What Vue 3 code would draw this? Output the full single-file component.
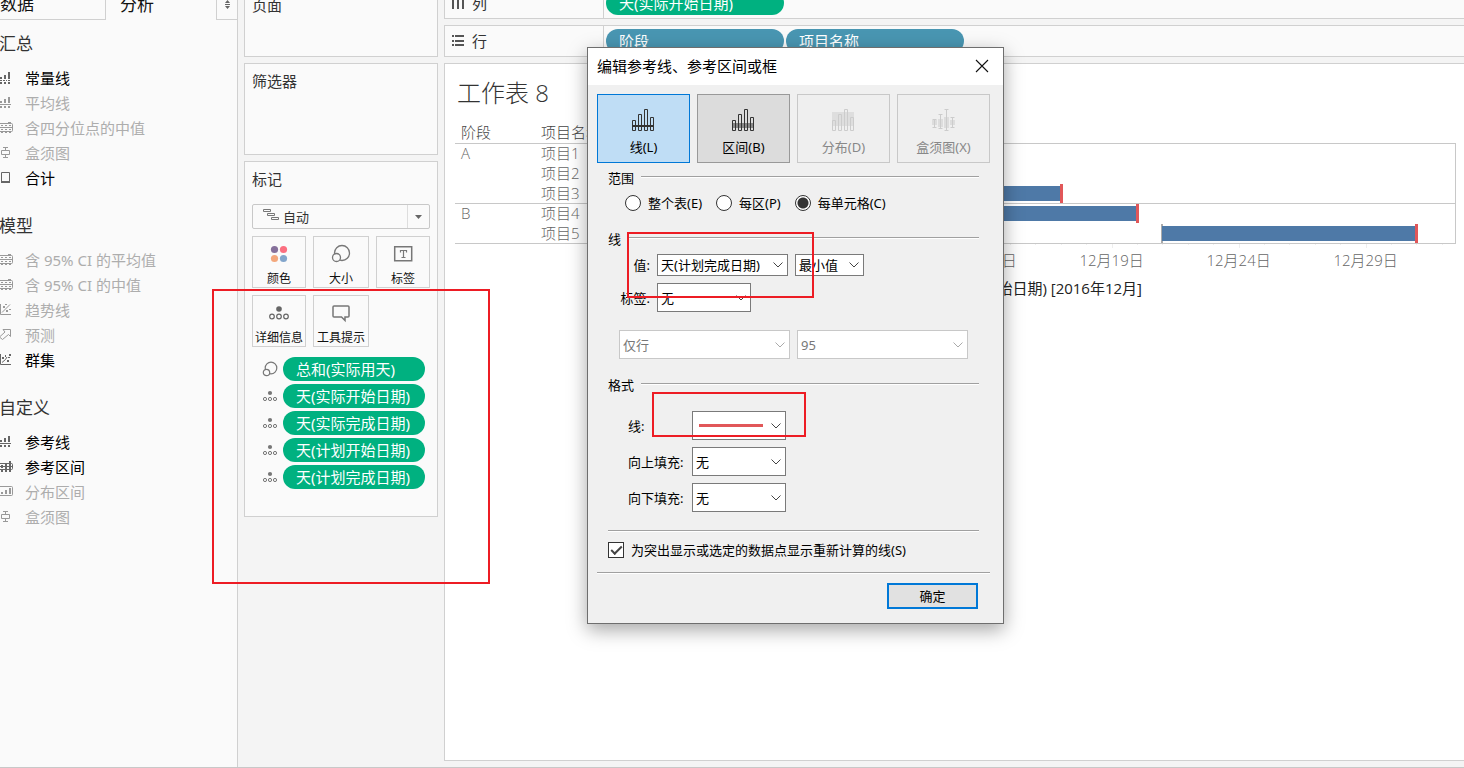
<script setup>
import { ref } from 'vue'

const glyphs = {
  constant: { fill: 'M1 6h2v2H1zM5 4h2v4H5zM9 1h2v7H9zM1 9h2v1H1zM4 9h2v1H4zM7 9h1v1H7zM9 9h2v1H9zM1 11h2v2H1zM5 11h2v2H5zM9 11h2v2H9z', line: '' },
  average: { fill: 'M1 5h2v2H1zM5 3h2v4H5zM9 1h2v6H9zM0 8h12v1H0zM1 10h2v2H1zM5 10h2v2H5zM9 10h2v2H9z', line: '' },
  band: { fill: 'M2 4h2v1H2zM6 4h2v1H6zM10 4h2v1h-2zM2 8h2v1H2zM6 8h2v1H6zM10 8h2v1h-2zM9 1h3v1H9zM2 11h2v1H2zM6 11h2v1H6zM10 11h2v1h-2z', line: 'M0 2.500h12.500q1 0 1 1v6q0 1-1 1H0M0 6.500h13' },
  box: { fill: '', line: 'M4 1.500h5M6.500 1.500v3M2.500 4.500h8v4h-8zM6.500 8.500v3M4 11.500h5' },
  total: { fill: 'M2 10h9v2H2z', line: 'M2.500 1.500h8v10h-8z' },
  trend: { fill: 'M4 3h2v2H4zM6 1h2v1H6zM7 7h2v2H7zM10 6h2v1h-2z', line: 'M1.500 1v10.500H12M3 9.500L11 1.500' },
  forecast: { fill: '', line: 'M4 1.500h7.500v7l-2-2L3.500 11.500.5 9 6 4z' },
  cluster: { fill: 'M3 4h2v2H3zM6 2h1v2H6zM9 4h2v1H9zM10 1h2v2h-2zM8 7h2v2H8z', line: 'M1.500 1v10.500H12M3 9.500L6.500 6.500 8 4' },
  interval: { fill: 'M2 5h2v3H2zM6 3h2v6H6zM10 1h2v8h-2zM2 10h2v2H2zM6 10h2v2H6zM10 10h2v2h-2zM0 6h13v1H0z', line: 'M0 3.500h12.500q1 0 1 1v4q0 1-1 1H0' },
  spread: { fill: 'M2 7h2v2H2zM6 5h2v4H6zM10 3h2v6h-2z', line: 'M0 1.500h12.500q1 0 1 1v7q0 1-1 1H0' }
}

const sections = [
  { title: '汇总', items: [
    { text: '常量线', icon: 'constant', on: true },
    { text: '平均线', icon: 'average', on: false },
    { text: '含四分位点的中值', icon: 'band', on: false },
    { text: '盒须图', icon: 'box', on: false },
    { text: '合计', icon: 'total', on: true }
  ] },
  { title: '模型', items: [
    { text: '含 95% CI 的平均值', icon: 'band', on: false },
    { text: '含 95% CI 的中值', icon: 'band', on: false },
    { text: '趋势线', icon: 'trend', on: false },
    { text: '预测', icon: 'forecast', on: false },
    { text: '群集', icon: 'cluster', on: true }
  ] },
  { title: '自定义', items: [
    { text: '参考线', icon: 'average', on: true },
    { text: '参考区间', icon: 'interval', on: true },
    { text: '分布区间', icon: 'spread', on: false },
    { text: '盒须图', icon: 'box', on: false }
  ] }
]

const markFields = [
  { text: '总和(实际用天)', size: true },
  { text: '天(实际开始日期)' },
  { text: '天(实际完成日期)' },
  { text: '天(计划开始日期)' },
  { text: '天(计划完成日期)' }
]

const SPAN = 32.52
const pct = (d) => (d / SPAN) * 100 + '%'

const bars = [
  { from: 2, to: 6, limit: 6 },
  { from: 5, to: 9, limit: 9 },
  { from: 8, to: 17, limit: 17 },
  { from: 12, to: 20, limit: 20 },
  { from: 21, to: 31, limit: 31 }
]
const days = Array.from({ length: 32 }, (_, i) => i + 1)
const ticks = [4, 9, 14, 19, 24, 29]

const kinds = [
  { id: 'line', text: '线(L)' },
  { id: 'range', text: '区间(B)' },
  { id: 'dist', text: '分布(D)' },
  { id: 'whisker', text: '盒须图(X)' }
]
const scopes = [
  { id: 'table', text: '整个表(E)' },
  { id: 'pane', text: '每区(P)' },
  { id: 'cell', text: '每单元格(C)' }
]
const scope = ref('cell')
const recalc = ref(true)
</script>

<template>
  <div class="app">
    <div class="workspace">
      <aside class="sidebar">
        <div class="tabs">
          <button class="tab tab-data">数据</button>
          <button class="tab tab-analysis">分析</button>
          <button class="tab tab-more" aria-label="展开">
            <svg width="7" height="9" viewBox="0 0 7 9"><path d="M3.500 0L6 3H1zM1 4h5v1H1zM3.500 9L6 6H1z" fill="#666" /></svg>
          </button>
        </div>
        <div class="groups">
          <section v-for="s in sections" :key="s.title" class="group">
            <h2>{{ s.title }}</h2>
            <ul>
              <li v-for="it in s.items" :key="it.text">
                <button class="option" :disabled="!it.on">
                  <svg width="14" height="13" viewBox="0 0 14 13">
                    <path :d="glyphs[it.icon].fill" fill="currentColor" />
                    <path :d="glyphs[it.icon].line" fill="none" stroke="currentColor" />
                  </svg>
                  <span>{{ it.text }}</span>
                </button>
              </li>
            </ul>
          </section>
        </div>
      </aside>

      <div class="cards">
        <section class="card card-pages"><h3>页面</h3></section>
        <section class="card card-filters"><h3>筛选器</h3></section>
        <section class="card card-marks">
          <h3>标记</h3>
          <div class="mark-type">
            <svg class="gantt" width="16" height="13" viewBox="0 0 16 13" fill="none" stroke="#777"><path d="M.5 1.500h7v2h-7zM4.500 5.500h7v2h-7zM8.500 9.500h7v2h-7z" /></svg>
            <select aria-label="标记类型"><option>自动</option></select>
            <svg class="caret" width="23" height="23" viewBox="0 0 23 23"><path d="M1.500 0v23" stroke="#ddd" /><path d="M9 10h7l-3.500 4z" fill="#666" /></svg>
          </div>
          <div class="mark-buttons">
            <button>
              <svg width="24" height="24" viewBox="0 0 24 24"><circle cx="7.500" cy="7.500" r="3.600" fill="#85709b" /><circle cx="16.500" cy="7.500" r="3.600" fill="#fb6f80" /><circle cx="7.500" cy="16.500" r="3.600" fill="#f3a77c" /><circle cx="16.500" cy="16.500" r="3.600" fill="#82a5cb" /></svg>
              <span>颜色</span>
            </button>
            <button>
              <svg width="24" height="24" viewBox="0 0 24 24" fill="none" stroke="#777" stroke-width="1.300"><circle cx="13" cy="11" r="7.500" /><circle cx="7.500" cy="15.500" r="4" fill="#fafafa" /></svg>
              <span>大小</span>
            </button>
            <button>
              <svg width="24" height="24" viewBox="0 0 24 24" fill="none" stroke="#777"><path stroke-width="1.500" d="M3.700 4.700h17v14h-17z" /><path d="M9.500 10.500v-2h6v2M12.500 8.500v7M10.500 15.500h4" stroke-width="1.200" /></svg>
              <span>标签</span>
            </button>
            <button>
              <svg width="24" height="24" viewBox="0 0 24 24" fill="none" stroke="#666" stroke-width="1.200"><circle cx="12" cy="8" r="2.800" fill="#666" stroke="none" /><circle cx="5" cy="15.500" r="2.300" /><circle cx="12" cy="15.500" r="2.300" /><circle cx="19" cy="15.500" r="2.300" /></svg>
              <span>详细信息</span>
            </button>
            <button>
              <svg width="24" height="24" viewBox="0 0 24 24" fill="none" stroke="#777" stroke-width="1.500"><path d="M5 5h14q1 0 1 1v9q0 1-1 1h-3v3.500L12.500 16H5q-1 0-1-1V6q0-1 1-1z" /></svg>
              <span>工具提示</span>
            </button>
          </div>
          <ul class="fields">
            <li v-for="f in markFields" :key="f.text">
              <svg v-if="f.size" width="16" height="16" viewBox="0 0 16 16" fill="none" stroke="#777" stroke-width="1.200"><circle cx="9" cy="7" r="5.800" /><circle cx="4.500" cy="11.500" r="3.200" fill="#fafafa" /></svg>
              <svg v-else width="16" height="16" viewBox="0 0 16 16" fill="none" stroke="#777"><circle cx="8" cy="5" r="2.100" fill="#777" stroke="none" /><circle cx="3" cy="11" r="1.600" /><circle cx="8" cy="11" r="1.600" /><circle cx="13" cy="11" r="1.600" /></svg>
              <span class="pill green">{{ f.text }}</span>
            </li>
          </ul>
        </section>
      </div>

      <main class="main">
        <div class="shelf">
          <div class="shelf-name">
            <svg width="12" height="12" viewBox="0 0 12 12" fill="#555"><path d="M0 0h2v1H0zM5 0h2v1H5zM10 0h2v1h-2zM0 2h2v10H0zM5 2h2v10H5zM10 2h2v10h-2z" /></svg>
            列
          </div>
          <div class="shelf-pills"><span class="pill green">天(实际开始日期)</span></div>
        </div>
        <div class="shelf">
          <div class="shelf-name">
            <svg width="12" height="12" viewBox="0 0 12 12" fill="#555"><path d="M0 0h2v2H0zM0 5h2v2H0zM0 9h2v2H0zM3 0h9v2H3zM3 5h9v2H3zM3 9h9v2H3z" /></svg>
            行
          </div>
          <div class="shelf-pills"><span class="pill blue">阶段</span><span class="pill blue">项目名称</span></div>
        </div>
        <section class="sheet">
          <h1>工作表 8</h1>
          <div class="view">
            <table>
              <thead><tr><th class="phase">阶段</th><th>项目名称</th></tr></thead>
              <tbody>
                <tr class="first"><td>A</td><td>项目1</td></tr>
                <tr><td></td><td>项目2</td></tr>
                <tr><td></td><td>项目3</td></tr>
                <tr class="first"><td>B</td><td>项目4</td></tr>
                <tr><td></td><td>项目5</td></tr>
              </tbody>
            </table>
            <div class="chart">
              <div class="pane">
                <div v-for="(b, i) in bars" :key="i" class="lane" :class="{ first: i === 0 || i === 3 }">
                  <i class="start" :style="{ left: pct(b.from) }"></i>
                  <i class="bar" :style="{ left: pct(b.from), width: pct(b.to - b.from) }"></i>
                  <i class="limit" :style="{ left: pct(b.limit) }"></i>
                </div>
              </div>
              <div class="axis">
                <i v-for="d in days" :key="d" class="tick" :class="{ major: d % 5 === 4 }" :style="{ left: pct(d) }"></i>
                <span v-for="t in ticks" :key="t" class="date" :style="{ left: pct(t) }">12月{{ t }}日</span>
              </div>
              <p class="axis-title">天(实际开始日期) [2016年12月]</p>
            </div>
          </div>
        </section>
      </main>
    </div>

    <div class="note note-marks"></div>

    <div class="dialog" role="dialog" aria-labelledby="dlg-title">
      <header>
        <h2 id="dlg-title">编辑参考线、参考区间或框</h2>
        <button class="close" aria-label="关闭"><svg width="14" height="14" viewBox="0 0 14 14"><path d="M1 1l12 12M13 1L1 13" stroke="#111" stroke-width="1.100" /></svg></button>
      </header>
      <div class="content">
        <div class="kinds">
          <button v-for="k in kinds" :key="k.id" class="kind" :class="k.id" :disabled="k.id === 'dist' || k.id === 'whisker'">
            <svg width="24" height="24" viewBox="1 0 24 24" fill="none" stroke="currentColor">
              <template v-if="k.id === 'whisker'">
                <path fill="currentColor" stroke="none" opacity=".5" d="M1 12h5v5H1zM7 11h5v8H7zM13 9h5v11h-5zM19 12h5v5h-5z" />
                <path d="M1.500 11.500h4M3.500 11v9M1.500 19.500h4M7.500 6.500h4M9.500 6v15M7.500 20.500h4M13.500 1.500h4M15.500 1v21M13.500 22.500h4M19.500 9.500h4M21.500 9v10M19.500 19.500h4" />
              </template>
              <template v-else>
                <path v-if="k.id === 'range'" d="M1 15h22v5H1z" fill="#888" stroke="none" />
                <path v-if="k.id === 'dist'" d="M1 4h22v14H1z" fill="#dedede" stroke="none" />
                <path d="M1.500 12.500h3v10h-3zM7.500 6.500h3v16h-3zM13.500 1.500h3v21h-3zM19.500 9.500h3v13h-3z" />
                <path v-if="k.id === 'line'" d="M1 18h22" stroke-width="2" />
              </template>
            </svg>
            <span>{{ k.text }}</span>
          </button>
        </div>

        <div class="legend"><span>范围</span></div>
        <div class="radios">
          <label v-for="s in scopes" :key="s.id"><input v-model="scope" type="radio" name="scope" :value="s.id" />{{ s.text }}</label>
        </div>

        <div class="legend legend-line"><span>线</span></div>
        <div class="rows value-rows">
          <div class="row">
            <label for="f-value">值:</label>
            <span class="pick short w-value"><select id="f-value"><option>天(计划完成日期)</option></select><svg viewBox="0 0 10 6"><path d="M.5.500L5 5 9.500.500" /></svg></span>
            <span class="pick short w-agg"><select aria-label="聚合"><option>最小值</option></select><svg viewBox="0 0 10 6"><path d="M.5.500L5 5 9.500.500" /></svg></span>
          </div>
          <div class="row">
            <label for="f-label">标签:</label>
            <span class="pick w-small"><select id="f-label"><option>无</option></select><svg viewBox="0 0 10 6"><path d="M.5.500L5 5 9.500.500" /></svg></span>
          </div>
        </div>
        <div class="pair">
          <span class="pick off"><select aria-label="置信范围" disabled><option>仅行</option></select><svg viewBox="0 0 10 6"><path d="M.5.500L5 5 9.500.500" /></svg></span>
          <span class="pick off"><select aria-label="置信度" disabled><option>95</option></select><svg viewBox="0 0 10 6"><path d="M.5.500L5 5 9.500.500" /></svg></span>
        </div>

        <div class="legend legend-format"><span>格式</span></div>
        <div class="rows format-rows">
          <div class="row">
            <label for="f-line">线:</label>
            <span class="pick w-small"><select id="f-line"><option></option></select><i class="swatch"></i><svg viewBox="0 0 10 6"><path d="M.5.500L5 5 9.500.500" /></svg></span>
          </div>
          <div class="row">
            <label for="f-above">向上填充:</label>
            <span class="pick w-small"><select id="f-above"><option>无</option></select><svg viewBox="0 0 10 6"><path d="M.5.500L5 5 9.500.500" /></svg></span>
          </div>
          <div class="row">
            <label for="f-below">向下填充:</label>
            <span class="pick w-small"><select id="f-below"><option>无</option></select><svg viewBox="0 0 10 6"><path d="M.5.500L5 5 9.500.500" /></svg></span>
          </div>
        </div>

        <hr class="inner" />
        <label class="recalc"><input v-model="recalc" type="checkbox" />为突出显示或选定的数据点显示重新计算的线(S)</label>
        <hr class="outer" />
        <div class="actions"><button class="ok">确定</button></div>
      </div>
      <div class="note note-value"></div>
      <div class="note note-format"></div>
    </div>
  </div>
</template>

<style>
html, body { margin: 0; background: #f4f4f4; }
</style>

<style scoped>
*, *::before, *::after { box-sizing: border-box; }
.app {
  position: relative; display: flex; flex-direction: column; height: 100vh; overflow: hidden;
  background: #f4f4f4; color: #333; border-bottom: 1px solid #c8c8c8;
  font-family: "Noto Sans", "Noto Sans CJK SC", sans-serif; font-size: 15px; line-height: 24px;
}
h1, h2, h3, p, ul { margin: 0; padding: 0; font-weight: 400; list-style: none; }
h3 { font-size: 15px; }
button, select, input { font: inherit; color: inherit; margin: 0; }
button { padding: 0; border: 0; background: none; }
svg { display: block; flex: none; }
i { display: block; }

.workspace { flex: 1; min-height: 0; margin-top: -13px; display: grid; grid-template-columns: 238px 194px minmax(0, 1fr); column-gap: 6px; }

.sidebar { background: #fafafa; border-right: 1px solid #d0d0d0; }
.tabs { display: flex; height: 33px; }
.tab { font-size: 17px; line-height: 24px; text-align: left; color: #111; padding-top: 2px; }
.tab-data { width: 106px; border-right: 1px solid #d0d0d0; border-bottom: 1px solid #d0d0d0; }
.tab-analysis { flex: 1; padding-left: 14px; }
.tab-more { width: 21px; display: flex; justify-content: center; align-items: center; border-left: 1px solid #d0d0d0; border-bottom: 1px solid #d0d0d0; }
.groups { padding-top: 12px; margin-left: -1px; }
.group { margin-bottom: 24px; }
.group h2 { font-size: 17px; line-height: 24px; margin-bottom: 9px; }
.option { display: flex; align-items: center; width: 100%; height: 25px; gap: 12px; text-align: left; color: #000; }
.option svg { color: #666; }
.option:disabled { color: #adadad; }
.option:disabled svg { color: #999; }

.cards { display: flex; flex-direction: column; gap: 6px; }
.card { background: #fafafa; border: 1px solid #d0d0d0; padding: 5px 7px; }
.card-pages { height: 70px; }
.card-filters { height: 92px; }
.card-marks { padding-bottom: 27px; }
.mark-type { position: relative; display: flex; height: 25px; margin: 13px 0 7px; }
.mark-type select { flex: 1; appearance: none; background: #fafafa; border: 1px solid #c8c8c8; border-radius: 2px; padding: 0 26px 0 30px; font-size: 13px; }
.gantt { position: absolute; left: 11px; top: 4px; }
.caret { position: absolute; right: 1px; top: 1px; }
.mark-buttons { display: grid; grid-template-columns: 54px minmax(0, 1fr) 54px; gap: 7px; }
.mark-buttons button { height: 52px; border: 1px solid #d0d0d0; display: flex; flex-direction: column; align-items: center; gap: 4px; padding-top: 5px; font-size: 12px; line-height: 18px; color: #111; white-space: nowrap; }
.fields { display: flex; flex-direction: column; gap: 3px; padding: 10px 5px 0 10px; }
.fields li { display: flex; align-items: center; gap: 5px; }
.fields .pill { flex: 1; }
.pill { height: 24px; border-radius: 12px; padding: 0 13px; color: #fff; line-height: 24px; white-space: nowrap; }
.green { background: #00b180; }
.blue { background: #4996b2; }

.main { display: flex; flex-direction: column; gap: 6px; padding-bottom: 6px; min-width: 0; min-height: 0; }
.shelf { display: flex; height: 32px; background: #fafafa; border: 1px solid #d0d0d0; border-right: 0; }
.shelf-name { width: 159px; display: flex; align-items: center; gap: 8px; padding-left: 7px; border-right: 1px solid #d0d0d0; }
.shelf-pills { display: flex; align-items: center; gap: 2px; padding-left: 2px; }
.shelf-pills .pill { width: 178px; }
.sheet { flex: 1; background: #fff; border: 1px solid #d0d0d0; border-right: 0; padding: 12px 8px 0 10px; }
.sheet h1 { font-size: 24px; line-height: 34px; margin: 0 0 13px 2px; font-weight: 300; font-family: "Open Sans", "Noto Sans CJK SC", sans-serif; }
.view { display: flex; color: #666; line-height: 19px; font-weight: 300; font-family: "Open Sans", "Noto Sans CJK SC", sans-serif; }
table { width: 174px; flex: none; align-self: flex-start; border-spacing: 0; table-layout: fixed; border-bottom: 1px solid #c8c8c8; }
th, td { height: 20px; padding: 0 0 0 6px; text-align: left; font-weight: 300; white-space: nowrap; }
th { color: #444; padding-bottom: 1px; }
.phase { width: 80px; }
tr.first td { border-top: 1px solid #c8c8c8; }
.chart { flex: 1; min-width: 0; padding-top: 20px; }
.pane { border-right: 1px solid #c8c8c8; border-bottom: 1px solid #c8c8c8; }
.lane { position: relative; height: 20px; }
.lane.first { border-top: 1px solid #c8c8c8; }
.lane i { position: absolute; bottom: 0; height: 19px; }
.lane .bar { bottom: 2px; height: 15px; background: #4e79a7; }
.lane .start { width: 2px; margin-left: -1px; background: #aaa; }
.lane .limit { width: 3px; margin-left: -1px; background: #e15759; }
.axis { position: relative; height: 31px; margin-right: 1px; }
.tick { position: absolute; top: 0; width: 1px; height: 1px; background: #eee; }
.tick.major { height: 4px; }
.date { position: absolute; top: 7px; transform: translateX(-50%); white-space: nowrap; }
.axis-title { line-height: 26px; padding-right: 10px; text-align: center; color: #222; font-weight: 400; }

.note { position: absolute; border: 2px solid #ed1c24; pointer-events: none; }
.note-marks { left: 212px; top: 289px; width: 278px; height: 295px; }
.note-value { left: 39px; top: 184px; width: 187px; height: 66px; }
.note-format { left: 64px; top: 344px; width: 154px; height: 45px; }

.dialog { position: absolute; left: 587px; top: 47px; width: 417px; background: #f0f0f0; border: 1px solid #6e6e6e; box-shadow: 0 6px 18px rgba(0, 0, 0, .35); color: #000; font-size: 13px; line-height: 18px; }
.dialog header { display: flex; align-items: center; justify-content: space-between; height: 37px; padding: 0 14px 2px 9px; background: #fff; }
.dialog header h2 { font-size: 15px; }
.content { padding: 9px 13px 14px 9px; }
.kinds { display: grid; grid-template-columns: repeat(4, 1fr); gap: 7px; }
.kind { height: 69px; border: 1px solid #999; background: #dcdcdc; display: flex; flex-direction: column; align-items: center; padding-top: 13px; gap: 6px; }
.kind.line { background: #bfddf5; border-color: #0078d7; }
.kind svg { color: #333; }
.kind:disabled { background: #efefef; border-color: #c8c8c8; color: #888; }
.kind:disabled svg { color: #ccc; }
.legend { display: flex; align-items: center; gap: 7px; margin: 6px 11px 0; }
.legend::after { content: ""; flex: 1; height: 2px; margin-bottom: 2px; background: #a0a0a0; border-bottom: 1px solid #fff; }
.legend-line { margin-top: 18px; }
.legend-format { margin-top: 17px; }
.radios { display: flex; gap: 14px; margin: 7px 0 0 28px; }
.radios label, .recalc { display: flex; align-items: center; gap: 7px; white-space: nowrap; }
.radios input { appearance: none; width: 16px; height: 16px; border: 1px solid #333; border-radius: 50%; background: #fff; }
.radios input:checked { background: radial-gradient(circle, #333 5px, #fff 6px); }
.rows { display: flex; flex-direction: column; gap: 7px; }
.row { display: flex; align-items: center; gap: 7px; }
.value-rows { margin-top: 6px; }
.value-rows label { width: 53px; text-align: right; }
.format-rows { margin: 17px 0 0 31px; }
.format-rows label { width: 57px; white-space: nowrap; }
.pick { position: relative; display: block; height: 29px; }
.pick.short { height: 22px; }
.pick select { display: block; width: 100%; height: 100%; appearance: none; border: 1px solid #7a7a7a; border-radius: 0; background: #fff; padding: 0 0 0 3px; }
.pick svg { position: absolute; right: 5px; top: 50%; margin-top: -3px; width: 10px; height: 6px; fill: none; stroke: #444; pointer-events: none; }
.pick.off select { border-color: #c8c8c8; color: #777; opacity: 1; }
.pick.off svg { stroke: #aaa; }
.w-value { width: 131px; }
.w-agg { width: 69px; }
.w-small { width: 94px; }
.pair { display: grid; grid-template-columns: 1fr 1fr; gap: 7px; margin: 18px 22px 0; }
.swatch { position: absolute; left: 7px; top: 13px; width: 64px; height: 3px; background: #e15759; pointer-events: none; }
hr { height: 2px; margin: 0; border: 0; background: #a0a0a0; border-bottom: 1px solid #fff; }
.inner { margin: 18px 11px 10px; }
.recalc { height: 16px; margin-left: 11px; }
.recalc input { appearance: none; width: 16px; height: 16px; border: 1px solid #333; background: #fff; display: grid; place-items: center; }
.recalc input:checked::before { content: ""; width: 11px; height: 6px; border: solid #444; border-width: 0 0 2px 2px; transform: translateY(-1px) rotate(-45deg); }
.outer { margin: 14px 0 9px; }
.actions { display: flex; justify-content: flex-end; padding-right: 12px; }
.ok { width: 91px; height: 26px; border: 2px solid #0078d7; background: #e1e1e1; }
</style>
